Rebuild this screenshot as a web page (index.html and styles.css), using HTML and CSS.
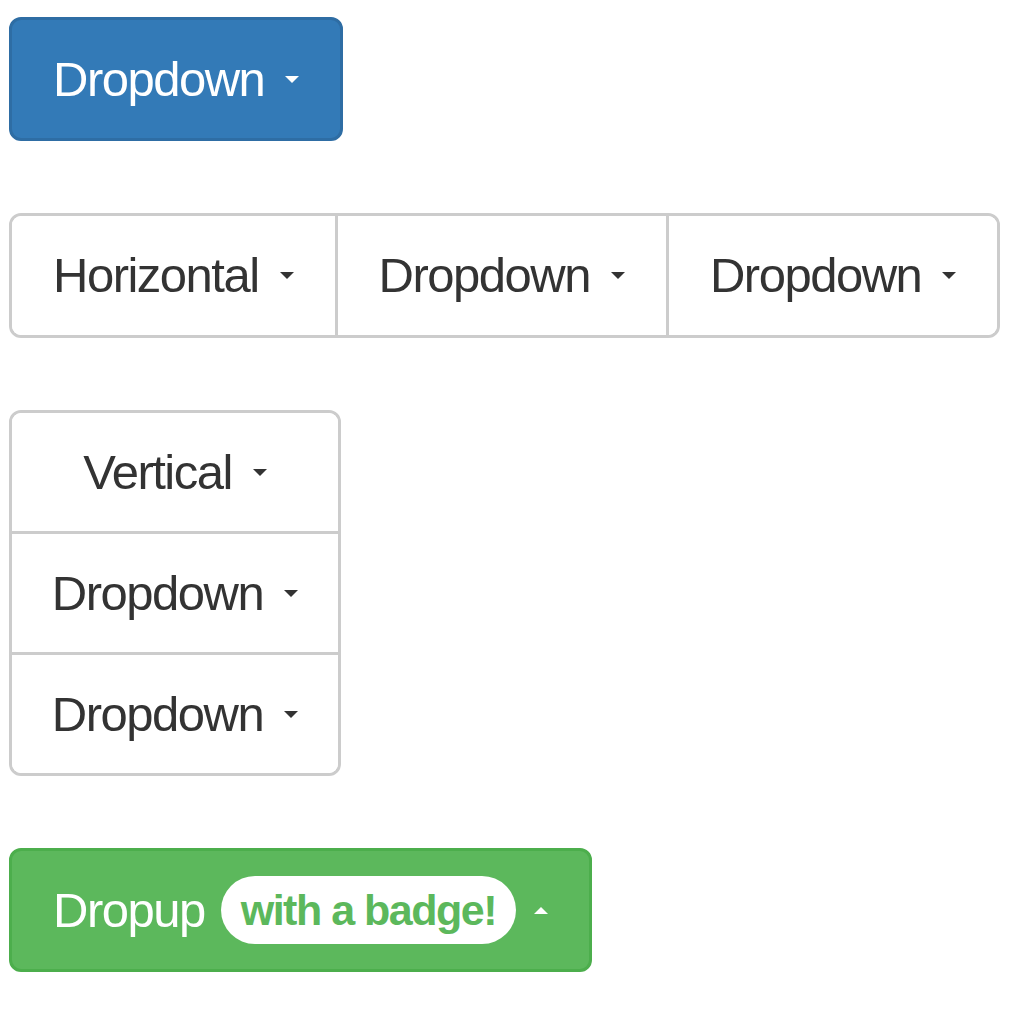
FILE: index.html
```html
<!DOCTYPE html>
<html>
<head>
<meta charset="utf-8">
<link rel="stylesheet" href="styles.css">
</head>
<body>
<div class="page">
  <button class="btn btn-primary"><span class="label">Dropdown</span><span class="caret"></span></button>

  <div class="btn-group">
    <button class="btn btn-default"><span class="label">Horizontal</span><span class="caret"></span></button>
    <button class="btn btn-default"><span class="label">Dropdown</span><span class="caret"></span></button>
    <button class="btn btn-default"><span class="label">Dropdown</span><span class="caret"></span></button>
  </div>

  <div class="btn-group-vertical">
    <button class="btn btn-default"><span class="label">Vertical</span><span class="caret"></span></button>
    <button class="btn btn-default"><span class="label">Dropdown</span><span class="caret"></span></button>
    <button class="btn btn-default"><span class="label">Dropdown</span><span class="caret"></span></button>
  </div>

  <button class="btn btn-success"><span class="label">Dropup</span><span class="badge">with a badge!</span><span class="caret caret-up"></span></button>
</div>
</body>
</html>
```

FILE: styles.css
```css
html, body {
  margin: 0;
  padding: 0;
  background: #ffffff;
}

.page {
  display: flex;
  flex-direction: column;
  align-items: flex-start;
  gap: 72px;
  padding: 17px 0 0 9px;
  font-family: "Liberation Sans", Arial, Helvetica, sans-serif;
}

.btn {
  display: flex;
  align-items: center;
  justify-content: center;
  box-sizing: border-box;
  margin: 0;
  padding: 0 41px;
  height: 124px;
  border: 3px solid #cccccc;
  border-radius: 12px;
  background: #ffffff;
  color: #333333;
  font-family: "Liberation Sans", Arial, Helvetica, sans-serif;
  font-size: 49px;
  letter-spacing: -1.5px;
  line-height: 1;
  cursor: pointer;
}

.label {
  display: block;
}

.caret {
  display: block;
  width: 0;
  height: 0;
  margin-left: 21px;
  border-top: 7px solid currentColor;
  border-left: 7px solid transparent;
  border-right: 7px solid transparent;
}

.caret-up {
  border-top: 0;
  border-bottom: 7px solid currentColor;
  margin-left: 18px;
}

.btn-primary {
  background: #337ab7;
  border-color: #2e6da4;
  color: #ffffff;
}

.btn-success {
  background: #5cb85c;
  border-color: #4cae4c;
  color: #ffffff;
}

.badge {
  display: flex;
  align-items: center;
  height: 68px;
  margin-left: 16px;
  padding: 0 20px;
  border-radius: 34px;
  background: #ffffff;
  color: #5cb85c;
  font-size: 43px;
  font-weight: bold;
  letter-spacing: -1.5px;
}

.btn-group {
  display: flex;
  height: 125px;
  box-sizing: border-box;
  border: 3px solid #cccccc;
  border-radius: 12px;
  overflow: hidden;
}

.btn-group .btn {
  height: auto;
  border: 0;
  border-radius: 0;
  padding: 0 41px;
}

.btn-group .btn + .btn {
  border-left: 3px solid #cccccc;
}

.btn-group-vertical {
  display: flex;
  flex-direction: column;
  width: 332px;
  height: 366px;
  box-sizing: border-box;
  border: 3px solid #cccccc;
  border-radius: 12px;
  overflow: hidden;
}

.btn-group-vertical .btn {
  flex: 1;
  width: 100%;
  height: auto;
  border: 0;
  border-radius: 0;
  padding: 0;
}

.btn-group-vertical .btn + .btn {
  border-top: 3px solid #cccccc;
}
```
